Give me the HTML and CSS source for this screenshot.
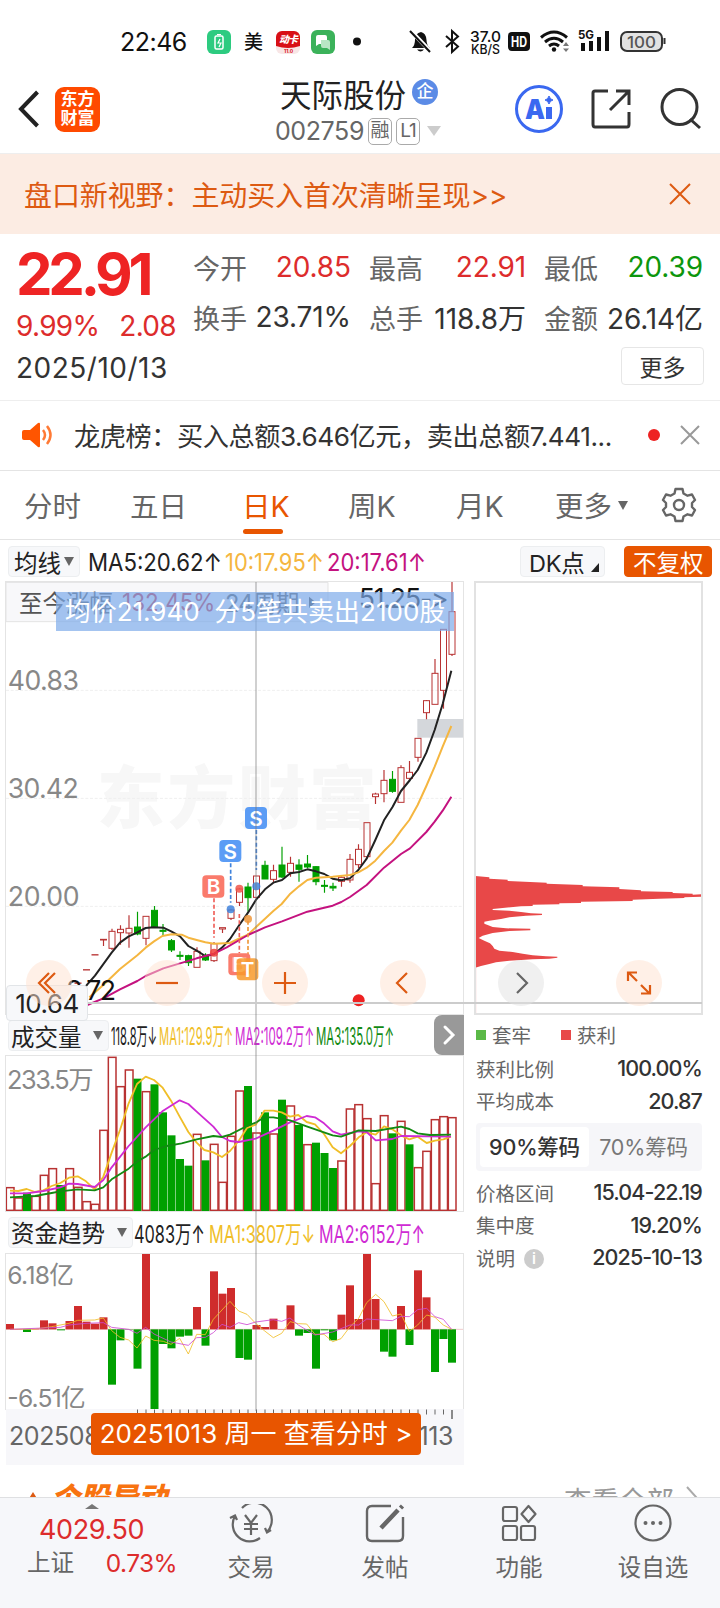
FILE: index.html
```html
<!DOCTYPE html>
<html lang="zh-CN">
<head>
    <meta charset="UTF-8">
    <meta name="viewport" content="width=device-width, initial-scale=1.0">
    <title>天际股份 002759</title>
    <link rel="stylesheet" href="styles.css">
</head>
<body>
<div class="app">
    <div class="statusbar">
        <span class="time">22:46</span>
        <svg class="st-left" width="160" height="28" viewBox="205 28 160 28">
            <rect x="207" y="30" width="24" height="24" rx="6" fill="#2dcb80"/>
            <rect x="215" y="36" width="8" height="13" rx="1.5" fill="none" stroke="#fff" stroke-width="1.5"/>
            <path d="M217 34.5h4M220 39l-2 4h3l-2 4" fill="none" stroke="#fff" stroke-width="1.2"/>
            <text x="244" y="49" font-size="19" font-weight="500" fill="#111">美</text>
            <rect x="276" y="31" width="24" height="23" rx="6" fill="#f8e6e6"/>
            <path d="M276 46V37a6 6 0 0 1 6-6h12a6 6 0 0 1 6 6v9q-12 4-24 0z" fill="#d80f16"/>
            <text x="279" y="43" font-size="10" font-weight="900" font-style="italic" fill="#fff" textLength="19">动卡</text>
            <text x="284" y="53" font-size="5" font-weight="700" fill="#d80f16">11.0</text>
            <rect x="311" y="30" width="24" height="24" rx="6" fill="#3bb25a"/>
            <path d="M316 37a2 2 0 0 1 2-2h7a2 2 0 0 1 2 2v7h-8l-3 2z" fill="#fff"/>
            <path d="M321 40h7a2 2 0 0 1 2 2v8l-3-2h-4a2 2 0 0 1-2-2z" fill="#b9e6c4"/>
            <circle cx="357" cy="41.500" r="4" fill="#111"/>
        </svg>
        <svg class="st-right" width="262" height="28" viewBox="406 28 262 28">
            <path d="M412 48q3-3 3-8 0-7 6-8 5 1 5.500 8 0 5 3.500 8zM417 49.500h7q-3.500 4-7 0z" fill="#111"/>
            <path d="M411 31l20 21" stroke="#fff" stroke-width="4"/>
            <path d="M410 31l20 21" stroke="#111" stroke-width="2"/>
            <path d="M446 36l12 10.500-6 5.500V31l6 5.500L446 47" fill="none" stroke="#111" stroke-width="2"/>
            <text x="470" y="42" font-size="15" font-weight="500" fill="#111" textLength="31" lengthAdjust="spacingAndGlyphs">37.0</text>
            <text x="471" y="54" font-size="13" font-weight="500" fill="#111" textLength="29" lengthAdjust="spacingAndGlyphs">KB/S</text>
            <rect x="508" y="32" width="22" height="19" rx="4" fill="#111"/>
            <text x="511" y="46.500" font-size="14" font-weight="700" fill="#fff" textLength="16" lengthAdjust="spacingAndGlyphs">HD</text>
            <path d="M541 37.500q13-11 26 0M545 42q9-7.500 18 0M549 46q5-4 10 0" fill="none" stroke="#111" stroke-width="3"/>
            <circle cx="554" cy="49.500" r="2.200" fill="#111"/>
            <path d="M563 46l3-4 3 4zM563 48.500l3 3.500 3-3.500z" fill="#777"/>
            <text x="578" y="39" font-size="12" font-weight="700" fill="#111" textLength="16" lengthAdjust="spacingAndGlyphs">5G</text>
            <path d="M583 43v8M591 41v10M599 37v14M607 31v20" stroke="#111" stroke-width="4"/>
            <rect x="621" y="32" width="41" height="19" rx="6" fill="#e2e2e2" stroke="#333" stroke-width="2"/>
            <path d="M664.500 38v6" stroke="#333" stroke-width="2"/>
            <text x="627" y="47.500" font-size="16" font-weight="500" fill="#555" textLength="29" lengthAdjust="spacingAndGlyphs">100</text>
        </svg>
    </div>

    <div class="header">
        <svg class="back" width="24" height="40" viewBox="0 0 24 40"><path d="M20.500 3L4 20l16.500 17" fill="none" stroke="#222" stroke-width="4"/></svg>
        <div class="logo">东方<br>财富</div>
        <div class="stock">
            <div class="stock-name">天际股份<span class="qi">企</span></div>
            <div class="stock-code">002759<span class="tag">融</span><span class="tag tag-l1">L1</span><i class="tri"></i></div>
        </div>
        <svg class="head-icons" width="190" height="52" viewBox="512 83 190 52">
            <circle cx="539" cy="109" r="22.500" fill="none" stroke="#3a68f0" stroke-width="3"/>
            <text x="525" y="119" font-size="27" font-weight="900" fill="#3a68f0" textLength="20" lengthAdjust="spacingAndGlyphs">A</text>
            <path d="M549 107v12" stroke="#3a68f0" stroke-width="6"/>
            <path d="M549 96q1 3.500 4 4-3 .5-4 4-1-3.500-4-4 3-.5 4-4z" fill="#3a68f0" stroke="#3a68f0" stroke-width="1"/>
            <path d="M608 91h-13q-2 0-2 2v31q0 3 2 3h32q2 0 2-3v-12M616 91h13v14M629 91l-19 19" fill="none" stroke="#333" stroke-width="3"/>
            <circle cx="679.500" cy="107" r="17.500" fill="none" stroke="#333" stroke-width="3"/>
            <path d="M690 119l10 9" stroke="#333" stroke-width="3"/>
        </svg>
    </div>

    <div class="banner">
        <span>盘口新视野：主动买入首次清晰呈现&gt;&gt;</span>
        <svg width="22" height="22" viewBox="0 0 22 22"><path d="M1 1l20 20M21 1L1 21" stroke="#dd5a12" stroke-width="2"/></svg>
    </div>

    <div class="quote">
        <div class="price">
            <div class="price-now">22.91</div>
            <div class="price-chg"><span>9.99%</span><span>2.08</span></div>
            <div class="price-date">2025/10/13</div>
        </div>
        <div class="quote-right">
            <div class="stats">
                <div class="stat"><span>今开</span><b class="up">20.85</b></div>
                <div class="stat"><span>最高</span><b class="up">22.91</b></div>
                <div class="stat"><span>最低</span><b class="down">20.39</b></div>
                <div class="stat"><span>换手</span><b>23.71%</b></div>
                <div class="stat"><span>总手</span><b>118.8万</b></div>
                <div class="stat"><span>金额</span><b>26.14亿</b></div>
            </div>
            <button class="more">更多</button>
        </div>
    </div>

    <div class="notice">
        <svg width="32" height="26" viewBox="0 0 32 26">
            <path d="M2 8h6l8-7q2-1 2 1v22q0 2-2 1l-8-7H2Q0 18 0 16v-6q0-2 2-2z" fill="#ff5500"/>
            <path d="M21 8q4 5 0 10M25 4q7 9 0 18" fill="none" stroke="#ff7a35" stroke-width="2.500"/>
        </svg>
        <span class="notice-text">龙虎榜：买入总额3.646亿元，卖出总额7.441...</span>
        <i class="dot"></i>
        <svg width="20" height="20" viewBox="0 0 20 20"><path d="M1 1l18 18M19 1L1 19" stroke="#999" stroke-width="2"/></svg>
    </div>

    <div class="tabs">
        <span>分时</span>
        <span>五日</span>
        <span class="active">日K</span>
        <span>周K</span>
        <span>月K</span>
        <span class="tab-more">更多<i class="tri tri-s"></i></span>
        <svg width="36" height="36" viewBox="0 0 36 36">
            <path d="M14.500 2h7l1 4.500 4 2.200 4.500-1.200 3 5.500-3 3v4l3 3-3 5.500-4.500-1.200-4 2.200-1 4.500h-7l-1-4.500-4-2.200L5 28.500 2 23l3-3v-4l-3-3 3-5.500 4.500 1.200 4-2.200z" fill="none" stroke="#666" stroke-width="2.400" stroke-linejoin="round"/>
            <circle cx="18" cy="18" r="5" fill="none" stroke="#666" stroke-width="2.400"/>
        </svg>
    </div>

    <div class="indicator">
        <span class="chip">均线<i class="tri tri-s"></i></span>
        <svg width="340" height="30" viewBox="88 546 340 30" font-size="24">
            <text x="88" y="570" fill="#222" textLength="134" lengthAdjust="spacingAndGlyphs">MA5:20.62↑</text>
            <text x="225" y="570" fill="#f5b640" textLength="99" lengthAdjust="spacingAndGlyphs">10:17.95↑</text>
            <text x="327" y="570" fill="#c4127f" textLength="99" lengthAdjust="spacingAndGlyphs">20:17.61↑</text>
        </svg>
        <span class="chip chip-dk">DK点<i class="corner"></i></span>
        <span class="chip chip-fq">不复权</span>
    </div>

    <div class="charts">
        <div class="left">
            <!-- all chart viewBoxes use 3 units per pixel -->
            <svg class="kline" width="457" height="432" viewBox="18 1746 1371 1296">
                <g font-size="203" font-weight="900" fill="#f7f7f7"><text x="290" y="2470" textLength="840">东方财富</text></g>
                <path d="M18 2071h1371M18 2395h1371M18 2719h1371" stroke="#efefef" stroke-width="3" stroke-dasharray="9 5"/>
                <rect x="1252" y="2157" width="140" height="56" fill="#d4d7db"/>
                <g font-size="80" fill="#888">
                    <text x="23" y="2069" textLength="214">40.83</text>
                    <text x="23" y="2393" textLength="213">30.42</text>
                    <text x="23" y="2717" textLength="216">20.00</text>
                </g>
                <g id="candles"></g>
                <g fill="none" stroke-width="6" stroke-linejoin="round">
                    <polyline stroke="#222" points="235,2988 262,2953 285,2927 335,2858 360,2828 385,2810 412,2797 437,2784 460,2782 490,2783 515,2795 540,2809 565,2838 590,2852 616,2868 642,2863 667,2842 690,2817 718,2775 744,2738 769,2698 795,2668 820,2648 846,2640 871,2620 897,2616 922,2608 948,2614 973,2622 998,2636 1024,2641 1050,2635 1075,2610 1100,2576 1126,2520 1152,2461 1178,2420 1203,2373 1230,2340 1253,2310 1279,2258 1304,2190 1328,2112 1354,2012"/>
                    <polyline stroke="#f5b640" points="268,2992 310,2955 360,2907 412,2866 437,2843 462,2824 487,2808 515,2803 545,2804 565,2813 590,2820 616,2827 642,2831 690,2829 718,2815 744,2804 769,2780 795,2756 820,2733 845,2712 871,2681 897,2659 922,2640 948,2633 998,2630 1050,2625 1075,2617 1100,2603 1126,2582 1152,2553 1177,2528 1203,2492 1228,2460 1253,2415 1279,2358 1304,2300 1328,2240 1354,2178"/>
                    <polyline stroke="#c4127f" points="262,3015 310,2995 360,2968 412,2943 437,2928 490,2905 540,2890 590,2875 642,2861 680,2842 718,2820 744,2805 795,2782 846,2764 922,2735 998,2717 1024,2706 1050,2691 1100,2655 1152,2603 1203,2562 1230,2545 1279,2496 1304,2465 1328,2432 1354,2390"/>
                </g>
                <!-- trade marks -->
                <g fill="none" stroke-width="5" stroke-dasharray="12 7">
                    <path d="M769 2490v120M692 2590v118" stroke="#3f82dc"/>
                    <path d="M642 2695v118M718 2742v118" stroke="#f0605a"/>
                    <path d="M744 2762v113" stroke="#f0983a"/>
                </g>
                <g fill-opacity=".85">
                    <circle cx="769" cy="2659" r="12" fill="#3f82dc"/>
                    <circle cx="692" cy="2728" r="12" fill="#3f82dc"/>
                    <circle cx="642" cy="2858" r="12" fill="#f03e3a"/>
                    <circle cx="718" cy="2666" r="12" fill="#f0564a"/>
                    <circle cx="744" cy="2757" r="12" fill="#f0983a"/>
                </g>
                <rect x="735" y="2421" width="66" height="66" rx="12" fill="#5b9cf5"/>
                <rect x="658" y="2520" width="66" height="66" rx="12" fill="#5b9cf5"/>
                <rect x="607" y="2626" width="66" height="67" rx="12" fill="#fa7b6c"/>
                <rect x="685" y="2860" width="66" height="66" rx="12" fill="#fa7b6c"/>
                <rect x="697" y="2872" width="42" height="42" fill="#fcb4a8"/>
                <g font-size="62" font-weight="600" fill="#fff" text-anchor="middle">
                    <text x="768" y="2477">S</text>
                    <text x="691" y="2576">S</text>
                    <text x="641" y="2682">B</text>
                    <text x="718" y="2915">B</text>
                    <rect x="710" y="2875" width="65" height="66" rx="12" fill="#f89a2a" fill-opacity=".85"/>
                    <text x="743" y="2930">T</text>
                </g>
                <!-- period gain strip -->
                <path d="M18 1747h966v118H18z" fill="#f7f7fa" fill-opacity=".9" stroke="#e3e3e3" stroke-width="3"/>
                <g font-size="71">
                    <text x="57" y="1835" fill="#555" textLength="282">至今涨幅</text>
                    <text x="366" y="1832" fill="#cc2233" textLength="280" lengthAdjust="spacingAndGlyphs">132.45%</text>
                    <text x="675" y="1835" fill="#555" textLength="223">24周期</text>
                    <path d="M927 1790v34l20-17z" fill="#444"/>
                </g>
                <text class="plain" x="1076" y="1825" font-size="80" fill="#111" textLength="270">51.25-&gt;</text>
                <text x="198" y="3001" font-size="80" fill="#111" textLength="150">8.72</text>
                <circle cx="1076" cy="3001" r="18" fill="#ee2222"/>
            </svg>

            <div class="pane-head">
                <span class="chip">成交量<i class="tri tri-s"></i></span>
                <svg width="286" height="36" viewBox="110 1017 286 36" font-size="24">
                    <text x="112" y="1045" fill="#222" textLength="46" lengthAdjust="spacingAndGlyphs">118.8万↓</text>
                    <text x="160" y="1045" fill="#f0be28" textLength="74" lengthAdjust="spacingAndGlyphs">MA1:129.9万↑</text>
                    <text x="236" y="1045" fill="#cf2bd4" textLength="79" lengthAdjust="spacingAndGlyphs">MA2:109.2万↑</text>
                    <text x="317" y="1045" fill="#128a12" textLength="78" lengthAdjust="spacingAndGlyphs">MA3:135.0万↑</text>
                </svg>
                <span class="fold"><svg width="14" height="22" viewBox="0 0 14 22"><path d="M3 3l8 8-8 8" fill="none" stroke="#fff" stroke-width="3" stroke-linecap="round"/></svg></span>
            </div>
            <svg class="pane" width="457" height="155" viewBox="18 138 1371 465">
                <g id="volume"></g>
                <text x="21" y="236" font-size="76" fill="#888" textLength="260">233.5万</text>
                <g fill="none" stroke-width="5.500" stroke-linejoin="round">
                    <polyline stroke="#f0be28" points="30,542 55,543 80,537 105,546 130,541 155,528 181,519 207,503 233,499 258,514 284,538 310,500 335,428 360,360 386,280 411,222 437,200 462,210 487,232 513,272 539,320 565,366 590,398 613,420 640,427 666,441 690,423 716,393 741,354 767,344 793,302 820,302 845,307 870,320 895,315 920,336 945,343 972,372 998,412 1023,430 1050,408 1076,382 1100,367 1127,374 1152,349 1177,358 1203,376 1228,388 1253,380 1280,399 1305,392 1330,388 1353,380"/>
                    <polyline stroke="#cf2bd4" points="30,550 80,550 130,543 181,532 207,521 233,522 284,531 310,510 335,472 386,408 437,352 487,304 539,271 565,282 590,305 640,350 666,381 690,393 716,396 767,386 820,362 870,337 920,318 945,322 972,340 998,364 1023,374 1076,364 1100,366 1127,391 1177,387 1203,378 1353,380"/>
                    <polyline stroke="#128a12" points="30,562 105,558 155,549 181,544 233,538 284,541 310,532 335,508 386,476 411,455 437,440 462,420 500,408 545,400 590,388 640,378 666,381 690,374 741,348 767,338 793,322 820,322 870,331 920,349 998,376 1023,380 1076,361 1127,363 1203,350 1228,357 1253,370 1290,375 1353,374"/>
                </g>
            </svg>

            <div class="pane-head pane-head2">
                <span class="chip">资金趋势<i class="tri tri-s"></i></span>
                <svg width="296" height="36" viewBox="132 1215 296 36" font-size="24">
                    <text x="133" y="1243" fill="#222" textLength="71" lengthAdjust="spacingAndGlyphs">4083万↑</text>
                    <text x="208" y="1243" fill="#f0be28" textLength="106" lengthAdjust="spacingAndGlyphs">MA1:3807万↓</text>
                    <text x="318" y="1243" fill="#cf2bd4" textLength="106" lengthAdjust="spacingAndGlyphs">MA2:6152万↑</text>
                </svg>
            </div>
            <svg class="pane" width="457" height="155" viewBox="18 132 1371 465">
                <g id="fund"></g>
                <g font-size="74" fill="#888">
                    <text x="22" y="222" textLength="200">6.18亿</text>
                    <text x="22" y="590" textLength="235">-6.51亿</text>
                </g>
                <g fill="none" stroke-width="2.500">
                    <polyline stroke="#f0be28" points="30,358 105,357 155,350 207,340 233,331 284,330 310,324 335,362 360,382 386,390 411,414 437,378 462,391 490,394 513,403 539,385 565,432 590,373 616,374 640,328 690,274 716,303 741,313 767,340 793,362 820,383 845,370 870,335 895,341 920,342 945,373 972,373 998,395 1023,386 1050,350 1076,325 1100,278 1127,253 1152,275 1177,318 1203,312 1228,364 1253,345 1280,315 1305,322 1330,345 1355,358"/>
                    <polyline stroke="#cf4bd4" points="30,358 181,352 207,345 258,340 310,338 335,352 386,358 411,370 437,352 462,372 513,396 565,406 590,383 616,382 640,368 666,343 690,352 716,338 741,344 767,336 820,329 845,334 870,324 895,345 945,375 998,366 1050,345 1076,345 1100,327 1177,332 1203,319 1228,320 1253,299 1280,295 1305,320 1330,328 1355,358"/>
                </g>
            </svg>

            <div class="dates">
                <svg class="ticks" width="457" height="12" viewBox="6 1409 457 12">
                    <path d="M137 1412h312" stroke="#666" stroke-width="5" stroke-dasharray="1 7.500"/>
                    <path d="M452 1410v9" stroke="#666" stroke-width="1.500"/>
                </svg>
                <div class="dates-row"><span>20250828</span><span>20251113</span></div>
                <div class="date-pop">20251013 周一 查看分时 &gt;</div>
            </div>

            <i class="cross-v"></i>
            <span class="price-label">10.64</span>
            <div class="toast">均价21.940&nbsp; 分5笔共卖出2100股</div>
        </div>

        <div class="right">
            <svg class="chips-chart" width="227" height="432" viewBox="47 -834 681 1296">
                <path d="M48 48L90 52V56L145 59V63L262 68V71L370 75V79L480 82V87L545 91V94L640 96V99L700 101V104L726 103V110L675 112V114L600 116L520 119V123L365 125V129L300 130V133L220 134V138L185 139L130 144L100 147V150L150 152L185 156L215 160L248 161V165L200 167L150 172L125 177L90 182L75 185V191L85 195L100 201L140 205L213 206V211L150 213L100 219L70 227L58 234L75 242L92 250L100 258L105 266L120 272L160 276L190 281L220 286L260 289L294 290V293L270 296L220 298L150 302L110 307L90 312L65 318L48 323z" fill="#e84848"/>
                <path d="M49 323v139" stroke="#f4b4b4" stroke-width="3"/>
            </svg>
            <div class="legend"><i class="sq sq-g"></i>套牢<i class="sq sq-r"></i>获利</div>
            <div class="row"><span>获利比例</span><b>100.00%</b></div>
            <div class="row"><span>平均成本</span><b>20.87</b></div>
            <div class="switch"><span class="on">90%筹码</span><span>70%筹码</span></div>
            <div class="row"><span>价格区间</span><b>15.04-22.19</b></div>
            <div class="row"><span>集中度</span><b>19.20%</b></div>
            <div class="row"><span>说明<i class="info">i</i></span><b>2025-10-13</b></div>
        </div>

        <i class="cross-h"></i>
        <div class="tools">
            <span><svg viewBox="0 0 46 46"><path d="M27 13L17 23l10 10M33 13L23 23l10 10" transform="translate(-4 0)"/></svg></span>
            <span><svg viewBox="0 0 46 46"><path d="M12 23h22"/></svg></span>
            <span><svg viewBox="0 0 46 46"><path d="M12 23h22M23 12v22"/></svg></span>
            <span><svg viewBox="0 0 46 46"><path d="M27 13L17 23l10 10"/></svg></span>
            <span class="grey"><svg viewBox="0 0 46 46"><path d="M19 13l10 10-10 10"/></svg></span>
            <span><svg viewBox="0 0 46 46"><path d="M12 21v-8.500h9M13 13l8 8M34 25v8.500h-9M33 33l-8-8"/></svg></span>
        </div>
    </div>

    <div class="section">
        <span class="sec-title"><i></i>个股异动</span>
        <span class="sec-all">查看全部<svg width="12" height="22" viewBox="0 0 12 22"><path d="M1 1l9 10-9 10" fill="none" stroke="#aaa" stroke-width="2"/></svg></span>
    </div>

    <div class="footer">
        <div class="index">
            <i class="tri-up"></i>
            <div class="index-val">4029.50</div>
            <div class="index-row"><span>上证</span><b>0.73%</b></div>
        </div>
        <div class="nav">
            <svg width="44" height="40" viewBox="0 0 44 40">
                <path d="M13 4a17 17 0 0 1 25 24M36 24l2 4.500 4-2.500M31 34A17 17 0 0 1 6 12M8 16L6 11.500 1 14" fill="none" stroke="#666" stroke-width="2.200"/>
                <path d="M16 11l6 8 6-8M22 19v12M15 20h14M15 25h14" fill="none" stroke="#666" stroke-width="2.200"/>
            </svg>交易
        </div>
        <div class="nav">
            <svg width="44" height="40" viewBox="0 0 44 40">
                <path d="M28 2H9Q4 2 4 7v25q0 5 5 5h26q5 0 5-5V13" fill="none" stroke="#666" stroke-width="2.400"/>
                <path d="M18 24L35 6M37.500 4l2-2" stroke="#666" stroke-width="4.500"/>
            </svg>发帖
        </div>
        <div class="nav">
            <svg width="44" height="40" viewBox="0 0 44 40">
                <g fill="none" stroke="#666" stroke-width="2.200">
                    <rect x="6" y="3" width="14" height="14" rx="2"/>
                    <rect x="6" y="22" width="14" height="14" rx="2"/>
                    <rect x="24" y="22" width="14" height="14" rx="2"/>
                    <path d="M31.500 2l7 8-7 8-7-8z" stroke-linejoin="round"/>
                </g>
            </svg>功能
        </div>
        <div class="nav">
            <svg width="44" height="40" viewBox="0 0 44 40">
                <circle cx="22" cy="19" r="17.500" fill="none" stroke="#666" stroke-width="2.200"/>
                <circle cx="14.500" cy="19" r="2" fill="#666"/><circle cx="22" cy="19" r="2" fill="#666"/><circle cx="29.500" cy="19" r="2" fill="#666"/>
            </svg>设自选
        </div>
    </div>
</div>
<script src="charts.js"></script>
</body>
</html>
```

FILE: styles.css
```css
body {
    margin: 0;
    background: #fff;
    color: #333;
    font-family: Inter, "Noto Sans CJK SC", sans-serif;
}
svg {
    display: block;
    flex: none;
}
i {
    font-style: normal;
}
b {
    font-weight: 400;
}
.app {
    width: 720px;
    height: 1608px;
    overflow: hidden;
    display: flex;
    flex-direction: column;
}
.app > div {
    flex: none;
    box-sizing: border-box;
}
.statusbar {
    height: 68px;
    padding: 28px 52px 12px 120px;
    display: flex;
    align-items: center;
}
.time {
    width: 85px;
    font-size: 25px;
    letter-spacing: -0.5px;
    color: #111;
    line-height: 28px;
}
.st-right {
    margin-left: auto;
}
.header {
    height: 86px;
    padding: 0 18px 3px 17px;
    display: flex;
    align-items: center;
    border-bottom: 1px solid #eee;
}
.logo {
    width: 45px;
    height: 45px;
    margin-left: 14px;
    padding-top: 3px;
    box-sizing: border-box;
    border-radius: 9px;
    background: #ff4a00;
    color: #fff;
    font-size: 17px;
    font-weight: 700;
    line-height: 19px;
    text-align: center;
}
.stock {
    width: 180px;
    margin-left: 173px;
    padding-top: 2px;
}
.stock-name {
    display: flex;
    align-items: center;
    height: 42px;
    padding-left: 7px;
    font-size: 31.5px;
    color: #222;
}
.qi {
    width: 26px;
    height: 26px;
    margin: -2px 0 0 6px;
    border-radius: 50%;
    background: #5b8be6;
    color: #fff;
    font-size: 17px;
    line-height: 25px;
    font-weight: 500;
    text-align: center;
}
.stock-code {
    display: flex;
    align-items: center;
    height: 34px;
    padding-left: 2px;
    font-size: 25px;
    letter-spacing: -0.4px;
    color: #666;
}
.tag {
    width: 22px;
    height: 25px;
    margin-left: 4px;
    border: 1px solid #aaa;
    border-radius: 5px;
    font-size: 19px;
    line-height: 24px;
    text-align: center;
    letter-spacing: 0;
}
.tag-l1 {
    letter-spacing: -1px;
}
.tri {
    margin-left: 7px;
    border: 7px solid transparent;
    border-top: 10px solid #ccc;
    border-bottom: 0;
}
.tri-s {
    display: inline-block;
    margin-left: 6px;
    border-width: 9px 5px 0;
    border-top-color: #666;
}
.head-icons {
    margin-left: auto;
}
.banner {
    height: 80px;
    padding: 0 29px 0 24px;
    display: flex;
    align-items: center;
    justify-content: space-between;
    background: #fcece3;
    color: #dd5a12;
    font-size: 28px;
    letter-spacing: -0.1px;
}
.quote {
    height: 167px;
    padding: 0 16px;
    display: flex;
    border-bottom: 1px solid #eee;
}
.price {
    width: 177px;
    white-space: nowrap;
}
.price-now {
    height: 73px;
    margin-top: 4px;
    font-size: 58px;
    font-weight: 700;
    letter-spacing: -4.2px;
    line-height: 73px;
    color: #ee2424;
}
.price-chg {
    display: flex;
    gap: 20px;
    height: 35px;
    line-height: 30px;
    font-size: 28px;
    letter-spacing: -0.7px;
    color: #dd2c2c;
}
.price-date {
    font-size: 28px;
    line-height: 44px;
    letter-spacing: 0.5px;
}
.quote-right {
    flex: 1;
}
.stats {
    display: grid;
    width: 511px;
    grid-template-columns: 158px 157px 159px;
    column-gap: 18px;
    grid-auto-rows: 50px;
    padding-top: 8px;
}
.stat {
    display: flex;
    justify-content: space-between;
    align-items: center;
    white-space: nowrap;
    font-size: 27px;
}
.stat b {
    font-size: 28px;
    letter-spacing: -0.1px;
}
.stat span {
    color: #666;
}
.stat .up {
    color: #dd2c2c;
}
.stat .down {
    color: #0d960d;
}
.more {
    display: block;
    width: 83px;
    height: 38px;
    margin: 5px 0 0 auto;
    padding: 0;
    border: 1px solid #e6e6e6;
    border-radius: 4px;
    background: #fff;
    color: #333;
    font: 23px Inter, "Noto Sans CJK SC", sans-serif;
}
.notice {
    height: 70px;
    padding: 0 20px 0 22px;
    display: flex;
    align-items: center;
    border-bottom: 1px solid #e4e4e4;
}
.notice svg {
    margin-top: -1px;
}
.notice-text {
    flex: none;
    width: 551px;
    margin: -2px 0 0 20px;
    font-size: 26.2px;
    letter-spacing: -0.45px;
    white-space: nowrap;
}
.dot {
    width: 12px;
    height: 12px;
    margin: -2px 20px 0 auto;
    border-radius: 50%;
    background: #ee2222;
}
.tabs {
    height: 69px;
    padding: 0 23px 0 24px;
    display: flex;
    align-items: stretch;
    border-bottom: 1px solid #e4e4e4;
    color: #666;
    font-size: 28.5px;
    line-height: 71px;
}
.tabs span {
    width: 108px;
    white-space: nowrap;
}
.tabs .active {
    position: relative;
    width: 107px;
    margin-left: 4px;
    color: #e85500;
}
.active::after {
    content: "";
    position: absolute;
    left: 1px;
    bottom: 5px;
    width: 40px;
    height: 5px;
    border-radius: 3px;
    background: #e85500;
}
.tabs span:nth-child(1) {
    width: 106px;
}
.tabs span:nth-child(4) {
    margin-left: -1px;
}
.tabs .tab-more {
    width: auto;
    margin-left: -9px;
}
.tab-more .tri-s {
    vertical-align: 7px;
}
.tabs svg {
    margin: 16px 0 0 auto;
}
.indicator {
    height: 42px;
    padding: 1px 8px 0;
    display: flex;
    align-items: center;
}
.chip {
    display: flex;
    align-items: center;
    box-sizing: border-box;
    height: 31px;
    width: 72px;
    padding-left: 5px;
    border: 1px solid #eceef0;
    border-radius: 4px;
    background: #f7f8fa;
    color: #222;
    font-size: 23.5px;
    white-space: nowrap;
}
.chip .tri-s {
    margin: 0 5px 0 auto;
}
.indicator .chip .tri-s {
    margin-right: 5px;
}
.indicator svg {
    margin-left: 8px;
}
.indicator svg, .pane-head svg {
    overflow: visible;
}
.chip-dk {
    width: 85px;
    margin-left: auto;
    padding-left: 8px;
    letter-spacing: -0.3px;
}
.corner {
    margin: 12px 0 0 7px;
    border-left: 8px solid transparent;
    border-bottom: 9px solid #222;
}
.chip-fq {
    width: 88px;
    margin-left: 19px;
    padding-left: 8px;
    border-color: #e85500;
    background: #e85500;
    color: #fff;
}
.charts {
    position: relative;
    height: 883px;
    padding: 0 18px 0 6px;
    display: flex;
    justify-content: space-between;
}
.left {
    position: relative;
    width: 458px;
}
.kline, .pane {
    outline: 1px solid #e4e4e4;
}
.pane-head {
    height: 42px;
    padding-left: 2px;
    display: flex;
    align-items: center;
}
.pane-head .chip {
    width: 101px;
    padding-left: 2px;
    margin-top: 1px;
}
.pane-head2 {
    height: 43px;
}
.pane-head2 .chip {
    width: 125px;
    margin-top: -1px;
}
.fold {
    display: flex;
    align-items: center;
    justify-content: center;
    width: 30px;
    height: 40px;
    margin-left: auto;
    border-radius: 8px 0 0 8px;
    background: #999;
}
.dates {
    position: relative;
    height: 56px;
    background: #f7f7fa;
}
.ticks {
    margin-bottom: -12px;
}
.dates-row {
    display: flex;
    justify-content: space-between;
    padding: 6px 11px 0 3px;
    color: #666;
    font-size: 25px;
    line-height: 42px;
    letter-spacing: -0.4px;
}
.date-pop {
    position: absolute;
    left: 85px;
    top: 4px;
    width: 330px;
    height: 42px;
    box-sizing: border-box;
    border-radius: 4px;
    background: #e85500;
    color: #fff;
    font-size: 26px;
    line-height: 42px;
    text-align: center;
    white-space: nowrap;
}
.cross-v {
    position: absolute;
    left: 249px;
    top: 0;
    width: 2px;
    height: 829px;
    background: rgba(120, 120, 120, 0.35);
}
.cross-h {
    position: absolute;
    left: 88px;
    top: 420px;
    width: 614px;
    height: 2px;
    background: #ccc;
}
.price-label {
    position: absolute;
    z-index: 2;
    left: 0;
    top: 403px;
    width: 82px;
    height: 36px;
    box-sizing: border-box;
    border: 1px solid #e2e5e8;
    border-radius: 4px;
    background: #f7f8fa;
    color: #222;
    font-size: 26px;
    line-height: 35px;
    letter-spacing: -0.5px;
    text-align: center;
}
.toast {
    position: absolute;
    left: 50px;
    top: 10px;
    width: 398px;
    height: 39px;
    background: rgba(125, 171, 234, 0.7);
    color: #fff;
    font-size: 26px;
    line-height: 40px;
    text-align: center;
    white-space: nowrap;
}
.plain {
    font-feature-settings: "calt" 0;
}
.tools {
    position: absolute;
    z-index: 3;
    left: 26px;
    top: 378px;
    display: flex;
    gap: 72px;
}
.tools span {
    width: 46px;
    height: 46px;
    border-radius: 50%;
    background: rgba(255, 225, 208, 0.5);
}
.tools path {
    fill: none;
    stroke: #dd5a12;
    stroke-width: 2.2;
}
.tools .grey {
    background: rgba(225, 225, 225, 0.5);
}
.tools .grey path {
    stroke: #666;
}
.right {
    width: 227px;
}
.chips-chart {
    outline: 2px solid #e2e2e2;
    outline-offset: -1px;
}
.legend {
    display: flex;
    align-items: center;
    height: 41px;
    color: #666;
    font-size: 19.5px;
}
.sq {
    width: 10px;
    height: 10px;
    margin: 0 6px 0 1px;
    background: #5bb947;
}
.sq-r {
    margin-left: 30px;
    background: #e84848;
}
.row {
    display: flex;
    align-items: center;
    justify-content: space-between;
    height: 32.5px;
    padding-left: 1px;
    color: #666;
    font-size: 19.5px;
}
.legend + .row {
    margin-top: -3px;
}
.row b {
    color: #333;
    font-size: 21.5px;
    font-weight: 500;
    letter-spacing: -0.9px;
}
.switch {
    display: flex;
    height: 48px;
    margin: 6px 0 5px 1px;
    padding: 4px;
    box-sizing: border-box;
    border-radius: 4px;
    background: #f6f6f9;
    color: #777;
    font-size: 21.5px;
    line-height: 40px;
}
.switch span {
    flex: 1;
    text-align: center;
    letter-spacing: -0.2px;
    white-space: nowrap;
}
.switch .on {
    border-radius: 4px;
    background: #fff;
    color: #333;
    font-weight: 500;
}
.info {
    display: inline-block;
    width: 20px;
    height: 20px;
    margin-left: 9px;
    border-radius: 50%;
    background: #ccc;
    color: #fff;
    font-size: 15px;
    font-weight: 600;
    line-height: 20px;
    text-align: center;
    vertical-align: 2px;
}
.section {
    height: 32px;
    padding: 16px 22px 0 28px;
    display: flex;
    justify-content: space-between;
    overflow: hidden;
    line-height: 34px;
}
.sec-title {
    display: flex;
    color: #f87310;
    font-size: 29px;
    font-weight: 900;
    font-style: italic;
}
.sec-title i {
    width: 0;
    height: 0;
    margin: 11px 13px 0 0;
    border: 5px solid transparent;
    border-bottom: 8px solid #dd5a12;
    border-top: 0;
}
.sec-all {
    display: flex;
    gap: 12px;
    color: #999;
    font-size: 27.5px;
    line-height: 40px;
}
.sec-all svg {
    margin-top: 5px;
}
.footer {
    height: 111px;
    display: flex;
    border-top: 1px solid #dfe0e2;
    background: #f6f7fa;
    color: #666;
    font-size: 23.5px;
}
.index {
    width: 184px;
    padding-top: 6px;
}
.tri-up {
    display: block;
    width: 0;
    margin-left: 85px;
    border: 7px solid transparent;
    border-top: 0;
    border-bottom: 5px solid #777;
}
.index-val {
    padding-left: 39px;
    font-size: 27px;
    line-height: 42px;
    letter-spacing: -0.4px;
    color: #dd2c2c;
}
.index-row {
    display: flex;
    justify-content: space-between;
    padding: 0 7px 0 27px;
    line-height: 24px;
}
.index-row b {
    color: #dd2c2c;
    font-size: 24.5px;
    letter-spacing: -0.6px;
}
.nav {
    width: 134px;
    padding-top: 6px;
    display: flex;
    flex-direction: column;
    align-items: center;
    gap: 7px;
    line-height: 34px;
}
```

FILE: charts.js
```js
const RED = '#b83232';
const GREEN = '#00a000';
const STEP = 25.5;

function el(parent, tag, attrs) {
    const node = document.createElementNS('http://www.w3.org/2000/svg', tag);
    for (const key in attrs) node.setAttribute(key, attrs[key]);
    parent.appendChild(node);
}

// [index, high, body top, body bottom, low, 1 = falling]
const candles = [
    [8, 2949, 2949, 2950, 2950], [9, 2909, 2909, 2910, 2910], [10, 2864, 2864, 2865, 2865],
    [11, 2818, 2818, 2820, 2838], [12, 2786, 2794, 2845, 2850], [13, 2776, 2788, 2798, 2834],
    [14, 2746, 2785, 2799, 2843], [15, 2735, 2781, 2802, 2806, 1], [16, 2749, 2749, 2815, 2836],
    [17, 2718, 2731, 2780, 2780, 1], [18, 2772, 2791, 2794, 2806, 1], [19, 2817, 2822, 2850, 2856, 1],
    [20, 2854, 2866, 2869, 2880, 1], [21, 2864, 2867, 2888, 2898, 1], [22, 2842, 2854, 2902, 2902],
    [23, 2860, 2866, 2880, 2883, 1], [24, 2826, 2831, 2882, 2886], [25, 2783, 2783, 2787, 2799],
    [26, 2728, 2730, 2755, 2760], [27, 2665, 2667, 2707, 2718], [28, 2648, 2661, 2693, 2735, 1],
    [29, 2628, 2628, 2692, 2698], [30, 2582, 2596, 2637, 2637, 1], [31, 2594, 2612, 2638, 2650],
    [32, 2540, 2595, 2631, 2634, 1], [33, 2570, 2590, 2617, 2630], [34, 2578, 2595, 2608, 2645, 1],
    [35, 2565, 2592, 2601, 2605, 1], [36, 2598, 2600, 2645, 2656, 1], [37, 2640, 2656, 2659, 2678, 1],
    [38, 2648, 2659, 2664, 2673, 1], [39, 2625, 2632, 2644, 2660], [40, 2562, 2578, 2640, 2648],
    [41, 2533, 2548, 2594, 2605], [42, 2468, 2468, 2570, 2576], [43, 2378, 2382, 2390, 2412],
    [44, 2310, 2341, 2381, 2407], [45, 2313, 2338, 2374, 2378, 1], [46, 2296, 2303, 2407, 2407],
    [47, 2283, 2317, 2335, 2340], [48, 2215, 2215, 2272, 2285], [49, 2100, 2102, 2138, 2158],
    [50, 1977, 2020, 2113, 2113], [51, 1888, 1888, 2071, 2126], [52, 1746, 1835, 1963, 1968]
];
const kline = document.getElementById('candles');
candles.forEach(([i, high, top, bottom, low, fall]) => {
    const x = 30 + i * STEP;
    const color = fall ? GREEN : RED;
    el(kline, 'path', { d: `M${x} ${high}V${top}M${x} ${bottom}V${low}`, stroke: color, 'stroke-width': 3.5 });
    el(kline, 'rect', {
        x: x - 9, y: top, width: 18, height: bottom - top,
        fill: fall ? GREEN : 'none', stroke: color, 'stroke-width': 3
    });
});

// bar top, negative = falling day
const volume = [
    531, 562, -548, 557, 494, 474, -525, 474, 530, 573, 581, 359, 140, 228, 178, -206, 243, -223,
    -307, -376, -447, -467, 371, -451, 401, 515, 377, 241, -228, 367, -307, 370, -269, 286, -345,
    402, -398, -429, -474, 451, 295, 282, 324, 519, 315, -370, 332, -403, 471, 422, 327, 318, 321
];
const vol = document.getElementById('volume');
volume.forEach((v, i) => {
    const top = Math.abs(v);
    if (v < 0) {
        el(vol, 'rect', { x: 18 + i * STEP, y: top, width: 24, height: 603 - top, fill: GREEN });
    } else {
        el(vol, 'rect', {
            x: 19 + i * STEP, y: top + 2, width: 23, height: 599 - top,
            fill: '#fff', stroke: RED, 'stroke-width': 4.5
        });
    }
});

// net inflow measured from the zero line
const fund = [
    16, 1, -8, 1, 27, 18, -3, 25, 70, 23, 17, 36, -166, -33, -1, -118, 226, -239, -44, -57, -22,
    -19, 67, -49, 174, 107, 124, -86, -91, 13, 7, 32, 1, 72, -19, -11, -118, -3, -33, 44, 132, 31,
    226, 91, -67, -82, 70, -47, 177, 96, -128, -29, -100
];
const flow = document.getElementById('fund');
el(flow, 'path', { d: 'M18 358H1389', stroke: '#e8b0b0', 'stroke-width': 2 });
fund.forEach((v, i) => {
    el(flow, 'rect', {
        x: 18 + i * STEP, y: v > 0 ? 358 - v : 358, width: 24, height: Math.abs(v),
        fill: v > 0 ? '#cf2c2c' : GREEN
    });
});
```
